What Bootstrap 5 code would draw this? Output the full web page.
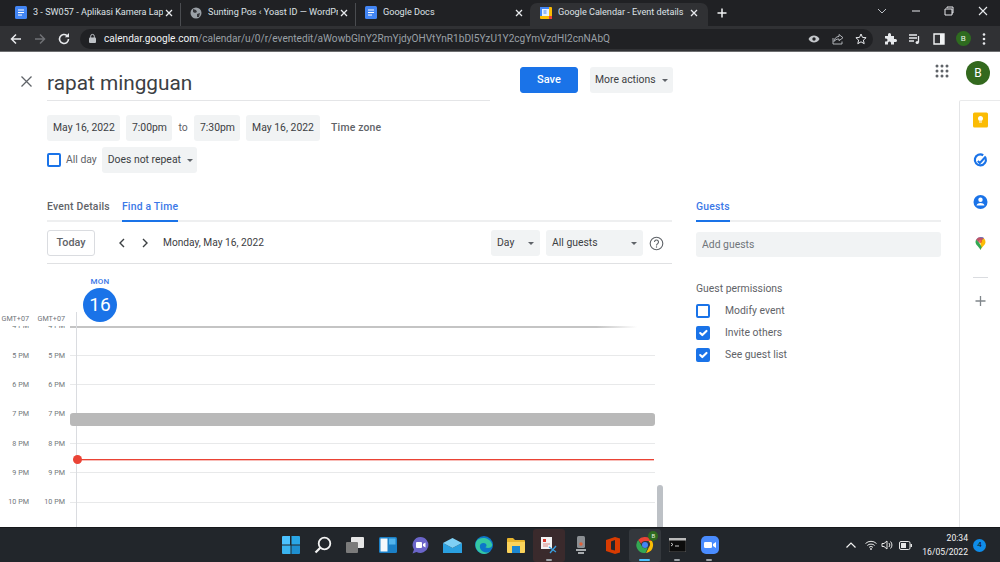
<!DOCTYPE html>
<html lang="en">

<head>
    <meta charset="UTF-8">
    <meta name="viewport" content="width=device-width, initial-scale=1">
    <title>Google Calendar - Event details</title>
    <link href="https://cdn.jsdelivr.net/npm/bootstrap@5.3.3/dist/css/bootstrap.min.css" rel="stylesheet">
    <style>
        html, body { height: 100%; overflow: hidden; }
        body { font-family: Roboto, "Liberation Sans", sans-serif; color: #3c4043; background: #fff; font-size: 10.4px; }

        /* browser chrome */
        .tab-strip { height: 26px; background: #202124; padding-left: 6px; color: #dee1e6; font-size: 9.1px; }
        .browser-tab { width: 175px; height: 23px; padding: 0 5px 4px 9px; border-right: 1px solid #4a4c50; margin-top: 3px; }
        .browser-tab.last-tab { width: 174px; border-right: 0; }
        .browser-tab.on { width: 178px; background: #303134; border: 0; border-radius: 7px 7px 0 0; padding-left: 10px; padding-right: 8px; }
        .tab-name { flex: 1; min-width: 0; white-space: nowrap; overflow: hidden; margin-left: 6px; }
        .tab-plus { margin-left: 7px; margin-top: 3px; padding-bottom: 4px; }
        .win-btns { margin-left: auto; width: 124px; padding-right: 11px; margin-top: -4px; }
        .tool-row { height: 26px; background: #303134; border-bottom: 1px solid #6d6e70; padding-left: 9px; }
        .tool-btn { width: 24px; flex: none; }
        .omni { width: 793px; height: 20px; margin-left: -1px; border-radius: 10px; background: #202124; padding: 0 0 0 8px; font-size: 10.1px; color: #9aa0a6; }
        .omni b { font-weight: 400; color: #f1f3f4; }
        .omni-url { margin-left: 3px; white-space: nowrap; }
        .omni-icons { margin-left: auto; width: 65px; flex: none; padding-right: 6px; }
        .ext-icons { width: 118px; padding: 0 5px 0 11px; flex: none; }
        .mini-avatar { width: 15px; height: 15px; border-radius: 50%; background: #2e6b1f; color: #e8f0e4; font-size: 8px; }

        /* main page */
        .page-main { height: 475px; }
        .left-area { width: 959px; }
        .side-col { width: 41px; }
        .top-row { height: 49px; }
        .close-col { width: 47px; padding-left: 20px; padding-top: 9px; }
        .event-title { width: 443px; height: 49px; padding-top: 16px; border-bottom: 1px solid #e4e5e7; font-size: 20.8px; color: #3c4043; line-height: 30px; }
        .save-btn { width: 58px; height: 26px; margin: 15px 0 0 30px; padding: 0; font-size: 11px; font-weight: 500; border-radius: 3px; background: #1a73e8; border-color: #1a73e8; }
        .grey-btn { height: 26px; padding: 0 6px; border: 0; border-radius: 3px; background: #f1f3f4; color: #3c4043; font-size: 10.4px; white-space: nowrap; }
        .grey-btn:hover { background: #f1f3f4; color: #3c4043; }
        .grey-btn.dropdown-toggle::after { color: #5f6368; margin-left: 6px; border-top-width: 3.5px; border-left-width: 3.5px; border-right-width: 3.5px; vertical-align: 1px; }
        .more-btn { width: 83px; margin: 15px 0 0 12px; padding-left: 5px; }
        .apps-btn { margin: 11px 10px 0 auto; }
        .date-row { height: 26px; margin-top: 14px; padding-left: 47px; }
        .repeat-row { height: 26px; margin-top: 6px; padding-left: 47px; }
        .date-chip { width: 73px; }
        .time-chip { width: 46px; margin-left: 6px; }
        .end-date { margin-left: 6px; width: 74px; }
        .to-word { width: 22px; text-align: center; color: #5f6368; }
        .zone-link { margin-left: 11px; color: #5f6368; font-weight: 500; font-size: 10.4px; letter-spacing: .2px; }
        .gcal-check.form-check-input { width: 14px; height: 14px; margin: 0; border: 2px solid #1a73e8; border-radius: 2px; box-shadow: none; flex: none; }
        .gcal-check.form-check-input:checked { background-color: #1a73e8; background-origin: border-box; background-size: 100%; }
        .allday-label { margin: 0 5px 0 5px; color: #5f6368; }
        .repeat-btn { width: 95px; }
        .lower-row { margin-top: 23px; padding-left: 47px; }
        .events-col { width: 625px; }
        .guests-col { width: 245px; margin-left: 24px; }
        .gcal-tabs { height: 26px; border-bottom: 2px solid #eeeff0; flex-wrap: nowrap; gap: 12px; }
        .gcal-tabs .nav-link { padding: 0; height: 26px; line-height: 21px; color: #5f6368; font-weight: 500; font-size: 10.4px; letter-spacing: .2px; }
        .gcal-tabs .nav-link.active { color: #3b78e7; border-bottom: 2px solid #1a73e8; }
        .find-bar { height: 42px; padding-top: 8px; padding-bottom: 7px; border-bottom: 1px solid #e0e1e3; }
        .today-btn { width: 48px; height: 26px; padding: 0; border: 1px solid #dadce0; border-radius: 3px; color: #5f6368; font-size: 10.8px; font-weight: 500; background: #fff; }
        .nav-arrow { margin-left: 22px; }
        .nav-arrow + .nav-arrow { margin-left: 13px; }
        .long-date { margin-left: 13px; font-size: 10.2px; }
        .day-btn { width: 49px; margin-left: auto; }
        .guest-filter { width: 97px; margin-left: 6px; }
        .help-btn { margin: 0 8px 0 6px; }

        /* calendar grid */
        .cal-wrap { position: relative; width: 672px; height: 263px; margin-left: -47px; overflow: hidden; }
        .cal-head { height: 62px; }
        .tz-label { font-size: 7.2px; color: #70757a; text-align: right; align-self: flex-end; padding-bottom: 1px; line-height: 12px; white-space: nowrap; }
        .tz-first, .hour-first { width: 29px; }
        .tz-second, .hour-second { width: 36px; }
        .hour-first, .hour-second { font-size: 7.2px; color: #70757a; text-align: right; white-space: nowrap; padding-top: 1px; }
        .head-day { margin-left: 18px; width: 34px; padding-top: 12px; position: relative; z-index: 2; }
        .head-dow { font-size: 8px; line-height: 11px; font-weight: 500; color: #3b78e7; text-align: center; letter-spacing: .3px; }
        .head-num { width: 34px; height: 34px; margin-top: 1px; border-radius: 50%; background: #1a73e8; color: #fff; font-size: 19px; }
        .hour-scroll { height: 201px; overflow: hidden; position: relative; }
        .hour-list { margin-top: -14.4px; }
        .hour-row { height: 29.3px; width: 655px; }
        .hour-line { flex: 1; margin-left: 5px; border-top: 1px solid #e8e9ea; }
        .top-shadow { position: absolute; top: 0; left: 70px; width: 585px; height: 2px; background: linear-gradient(90deg, #c4c4c4 90%, #fff 97%); }
        .day-rule { position: absolute; left: 76px; top: 48px; bottom: 0; border-left: 1px solid #dadce0; }
        .busy-block { position: absolute; left: 70px; top: 149px; width: 585px; height: 13px; border-radius: 3px; background: #b9b9b9; }
        .now-line { position: absolute; left: 77px; top: 195px; width: 577px; height: 1px; background: #ea4335; box-shadow: 0 1px 0 rgba(234, 67, 53, .35); }
        .now-dot { position: absolute; left: 72.5px; top: 191px; width: 9px; height: 9px; border-radius: 50%; background: #ea4335; }
        .scroll-thumb { position: absolute; left: 657px; top: 221px; width: 6px; height: 50px; border-radius: 3px; background: #bdc1c6; }

        /* guests */
        .guest-input.form-control { height: 25px; margin-top: 10px; padding: 0 6px; border: 0; border-radius: 3px; background: #f1f3f4; font-size: 10.4px; box-shadow: none; }
        .guest-input.form-control::placeholder { color: #70757a; }
        .perm-title { margin-top: 24px; line-height: 16px; color: #5f6368; }
        .perm-list { margin-top: 3px; }
        .perm-row { height: 22px; }
        .perm-row label { margin-left: 15px; color: #5f6368; }

        /* right side */
        .account-box { height: 48px; padding: 9px 0 0 7px; }
        .big-avatar { width: 24px; height: 24px; border-radius: 50%; background: #33691e; color: #fff; font-size: 12px; }
        .addon-panel { height: 427px; border-left: 1px solid #e4e5e7; border-top: 1px solid #e9eaeb; border-top-left-radius: 2px; padding-top: 8px; gap: 19px; }
        .addon-rule { width: 15px; border-top: 1px solid #dadce0; margin-top: 4px; }
        .addon-plus { margin-top: -7px; }

        /* taskbar */
        .task-bar { height: 35px; background: #22262b; padding-left: 275px; border-top: 1px solid #16181b; }
        .task-icon { width: 32.2px; height: 33px; flex: none; position: relative; }
        .task-icon.active-app { background: #34383d; border-radius: 3px; }
        .task-icon.snip-app { background: #3a2a2c; border-radius: 3px; }
        .run-mark { position: absolute; bottom: 1px; left: 13px; width: 6px; height: 2px; border-radius: 1px; background: #9da3a8; }
        .active-app .run-mark { background: #4cc2ff; width: 11px; left: 10px; }
        .chrome-badge { position: absolute; top: 2px; right: 3px; width: 10px; height: 10px; border-radius: 50%; background: #2e6b1f; color: #e8f0e4; font-size: 6px; }
        .tray { margin-left: auto; color: #f3f3f3; padding-right: 14px; }
        .tray-batt { margin-left: 6px; }
        .clock { font-size: 8.6px; line-height: 14px; text-align: right; margin-left: 10px; white-space: nowrap; }
        .notif { width: 13px; height: 13px; margin-left: 5px; border-radius: 50%; background: #0f8ce9; color: #111; font-size: 8px; }
    </style>
</head>

<body>

    <div class="d-flex tab-strip">
        <div class="d-flex align-items-center browser-tab">
            <svg width="12" height="13" viewBox="0 0 12 13"><rect width="12" height="13" rx="1.5" fill="#4285f4"/><path d="M3 4h6M3 6.5h6M3 9h4" stroke="#fff" stroke-width="1"/></svg>
            <span class="tab-name">3 - SW057 - Aplikasi Kamera Lap</span>
            <svg width="12" height="12" viewBox="0 0 12 12"><path d="M3 3l6 6M9 3l-6 6" stroke="#e8eaed" stroke-width="1.3"/></svg>
        </div>
        <div class="d-flex align-items-center browser-tab">
            <svg width="12" height="12" viewBox="0 0 12 12"><circle cx="6" cy="6" r="5.5" fill="#9aa0a6"/><path d="M3 2l3 1 1 2-2 1-2-1zM7 7l3-1-1 4-2 0z" fill="#35363a"/></svg>
            <span class="tab-name">Sunting Pos ‹ Yoast ID — WordPr</span>
            <svg width="12" height="12" viewBox="0 0 12 12"><path d="M3 3l6 6M9 3l-6 6" stroke="#e8eaed" stroke-width="1.3"/></svg>
        </div>
        <div class="d-flex align-items-center browser-tab last-tab">
            <svg width="12" height="13" viewBox="0 0 12 13"><rect width="12" height="13" rx="1.5" fill="#4285f4"/><path d="M3 4h6M3 6.5h6M3 9h4" stroke="#fff" stroke-width="1"/></svg>
            <span class="tab-name">Google Docs</span>
            <svg width="12" height="12" viewBox="0 0 12 12"><path d="M3 3l6 6M9 3l-6 6" stroke="#e8eaed" stroke-width="1.3"/></svg>
        </div>
        <div class="d-flex align-items-center browser-tab on">
            <svg width="12" height="12" viewBox="0 0 12 12"><rect width="12" height="12" rx="1" fill="#fbbc04"/><rect x="0" y="0" width="9" height="9" fill="#4285f4"/><rect x="2" y="2" width="7" height="7" fill="#e8f0fe"/><path d="M9 9h3v3H9z" fill="#ea4335"/><path d="M3.5 4h3M3.5 6h3" stroke="#4285f4"/></svg>
            <span class="tab-name">Google Calendar - Event details</span>
            <svg width="12" height="12" viewBox="0 0 12 12"><path d="M3 3l6 6M9 3l-6 6" stroke="#e8eaed" stroke-width="1.3"/></svg>
        </div>
        <div class="d-flex align-items-center tab-plus">
            <svg width="14" height="14" viewBox="0 0 14 14"><path d="M7 2.5v9M2.5 7h9" stroke="#f1f3f4" stroke-width="1.5"/></svg>
        </div>
        <div class="d-flex align-items-center justify-content-between win-btns">
            <svg width="12" height="12" viewBox="0 0 12 12"><path d="M2 4l4 4 4-4" stroke="#bdc1c6" fill="none"/></svg>
            <svg width="12" height="12" viewBox="0 0 12 12"><path d="M2 6h8" stroke="#e8eaed"/></svg>
            <svg width="12" height="12" viewBox="0 0 12 12"><path d="M4 3V2h6v6H9M2 4h7v6H2z" stroke="#e8eaed" fill="none"/></svg>
            <svg width="12" height="12" viewBox="0 0 12 12"><path d="M2 2l8 8M10 2l-8 8" stroke="#e8eaed" stroke-width="1.1"/></svg>
        </div>
    </div>

    <div class="d-flex align-items-center tool-row">
        <span class="tool-btn"><svg width="14" height="14" viewBox="0 0 14 14"><path d="M12 7H2.5M7 2.5L2.5 7 7 11.5" stroke="#e8eaed" stroke-width="1.5" fill="none"/></svg></span>
        <span class="tool-btn"><svg width="14" height="14" viewBox="0 0 14 14"><path d="M2 7h9.5M7 2.5L11.5 7 7 11.5" stroke="#6f7175" stroke-width="1.5" fill="none"/></svg></span>
        <span class="tool-btn"><svg width="14" height="14" viewBox="0 0 14 14"><path d="M11.5 7A4.5 4.5 0 1 1 10 3.6" stroke="#e8eaed" stroke-width="1.6" fill="none"/><path d="M12 1v4.2H7.8z" fill="#e8eaed"/></svg></span>
        <div class="d-flex align-items-center omni">
            <svg width="9" height="11" viewBox="0 0 9 11" class="me-1"><rect x="1" y="4.5" width="7" height="5.5" rx="1" fill="#bdc1c6"/><path d="M2.7 5V3.2a1.8 1.8 0 0 1 3.6 0V5" stroke="#bdc1c6" fill="none"/></svg>
            <span class="omni-url"><b>calendar.google.com</b>/calendar/u/0/r/eventedit/aWowbGlnY2RmYjdyOHVtYnR1bDI5YzU1Y2cgYmVzdHI2cnNAbQ</span>
            <div class="d-flex align-items-center justify-content-between omni-icons">
                <svg width="12" height="12" viewBox="0 0 12 12"><path d="M.5 6C2 3.3 4 2.5 6 2.5S10 3.3 11.5 6C10 8.7 8 9.5 6 9.5S2 8.7.5 6z" fill="#c4c7cb"/><circle cx="6" cy="6" r="1.7" fill="#202124"/></svg>
                <svg width="12" height="12" viewBox="0 0 12 12"><path d="M7 1.5l4 3.2-4 3V6C4.5 6 3 7 2 8.5 2.3 5.5 4 3.7 7 3.4zM1 5v6h9V8.5" stroke="#bdc1c6" fill="none" stroke-width=".9"/></svg>
                <svg width="12" height="12" viewBox="0 0 12 12"><path d="M6 1l1.500 3.400 3.600.3-2.700 2.400.8 3.600L6 8.800l-3.200 1.900.8-3.600L.9 4.700l3.600-.3z" stroke="#e8eaed" fill="none"/></svg>
            </div>
        </div>
        <div class="d-flex align-items-center justify-content-between ext-icons">
            <svg width="13" height="13" viewBox="0 0 13 13"><path d="M1 4h3V2.500a1.500 1.500 0 0 1 3 0V4h3v3h1.500a1.500 1.500 0 0 1 0 3H10v2.500H7V11a1.500 1.500 0 0 0-3 0v1.500H1V9.500h1a1.500 1.500 0 0 0 0-3H1z" fill="#e8eaed"/></svg>
            <svg width="13" height="12" viewBox="0 0 13 12"><path d="M1 2h8M1 5h8M1 8h5" stroke="#e8eaed" stroke-width="1.3"/><path d="M10.500 3v6.500" stroke="#e8eaed" stroke-width="1.3"/><circle cx="9.200" cy="9.500" r="1.600" fill="#e8eaed"/></svg>
            <svg width="12" height="12" viewBox="0 0 12 12"><path d="M1 1h10v10H1z" stroke="#f1f3f4" stroke-width="1.4" fill="none"/><path d="M7 1h4v10H7z" fill="#f1f3f4"/></svg>
            <span class="d-flex align-items-center justify-content-center mini-avatar">B</span>
            <svg width="4" height="14" viewBox="0 0 4 14"><circle cx="2" cy="2.500" r="1.300" fill="#e8eaed"/><circle cx="2" cy="7" r="1.300" fill="#e8eaed"/><circle cx="2" cy="11.500" r="1.300" fill="#e8eaed"/></svg>
        </div>
    </div>

    <div class="d-flex page-main">
        <div class="left-area">
            <div class="d-flex top-row">
                <div class="d-flex align-items-center close-col">
                    <svg width="13" height="13" viewBox="0 0 13 13"><path d="M1.500 1.500l10 10M11.500 1.500l-10 10" stroke="#5f6368" stroke-width="1.3"/></svg>
                </div>
                <div class="event-title">rapat mingguan</div>
                <button type="button" class="btn btn-primary save-btn">Save</button>
                <button type="button" class="btn grey-btn dropdown-toggle more-btn">More actions</button>
                <div class="apps-btn">
                    <svg width="14" height="14" viewBox="0 0 14 14" fill="#5f6368"><circle cx="2" cy="2" r="1.500"/><circle cx="7" cy="2" r="1.500"/><circle cx="12" cy="2" r="1.500"/><circle cx="2" cy="7" r="1.500"/><circle cx="7" cy="7" r="1.500"/><circle cx="12" cy="7" r="1.500"/><circle cx="2" cy="12" r="1.500"/><circle cx="7" cy="12" r="1.500"/><circle cx="12" cy="12" r="1.500"/></svg>
                </div>
            </div>

            <div class="d-flex align-items-center date-row">
                <button type="button" class="btn grey-btn date-chip">May 16, 2022</button>
                <button type="button" class="btn grey-btn time-chip">7:00pm</button>
                <span class="to-word">to</span>
                <button type="button" class="btn grey-btn time-chip ms-0">7:30pm</button>
                <button type="button" class="btn grey-btn end-date">May 16, 2022</button>
                <span class="zone-link">Time zone</span>
            </div>

            <div class="d-flex align-items-center repeat-row">
                <input class="form-check-input gcal-check" type="checkbox" id="allDay">
                <label class="allday-label" for="allDay">All day</label>
                <button type="button" class="btn grey-btn dropdown-toggle repeat-btn">Does not repeat</button>
            </div>

            <div class="d-flex lower-row">
                <div class="events-col">
                    <ul class="nav gcal-tabs">
                        <li class="nav-item"><a class="nav-link" href="#">Event Details</a></li>
                        <li class="nav-item"><a class="nav-link active" href="#">Find a Time</a></li>
                    </ul>

                    <div class="d-flex align-items-center find-bar">
                        <button type="button" class="btn today-btn">Today</button>
                        <svg class="nav-arrow" width="10" height="12" viewBox="0 0 10 12"><path d="M7 2L3 6l4 4" stroke="#3c4043" stroke-width="1.4" fill="none"/></svg>
                        <svg class="nav-arrow" width="10" height="12" viewBox="0 0 10 12"><path d="M3 2l4 4-4 4" stroke="#3c4043" stroke-width="1.4" fill="none"/></svg>
                        <span class="long-date">Monday, May 16, 2022</span>
                        <button type="button" class="btn grey-btn dropdown-toggle d-flex align-items-center justify-content-between day-btn">Day</button>
                        <button type="button" class="btn grey-btn dropdown-toggle d-flex align-items-center justify-content-between guest-filter">All guests</button>
                        <svg class="help-btn" width="15" height="15" viewBox="0 0 15 15"><circle cx="7.5" cy="7.5" r="6.3" stroke="#5f6368" stroke-width="1.1" fill="none"/><path d="M5.5 6a2 2 0 1 1 3.2 1.6c-.8.6-1.2 1-1.2 1.9" stroke="#5f6368" stroke-width="1.1" fill="none"/><circle cx="7.5" cy="11" r=".7" fill="#5f6368"/></svg>
                    </div>

                    <div class="cal-wrap">
                        <div class="d-flex cal-head">
                            <div class="tz-label tz-first">GMT+07</div>
                            <div class="tz-label tz-second">GMT+07</div>
                            <div class="head-day">
                                <div class="head-dow">MON</div>
                                <div class="d-flex align-items-center justify-content-center head-num">16</div>
                            </div>
                        </div>
                        <div class="hour-scroll">
                            <div class="hour-list" id="hourList"></div>
                            <div class="top-shadow"></div>
                        </div>
                        <div class="day-rule"></div>
                        <div class="busy-block"></div>
                        <div class="now-line"></div>
                        <div class="now-dot"></div>
                        <div class="scroll-thumb"></div>
                    </div>
                </div>

                <div class="guests-col">
                    <ul class="nav gcal-tabs">
                        <li class="nav-item"><a class="nav-link active" href="#">Guests</a></li>
                    </ul>
                    <input type="text" class="form-control guest-input" placeholder="Add guests">
                    <div class="perm-title">Guest permissions</div>
                    <div class="perm-list">
                        <div class="d-flex align-items-center perm-row">
                            <input class="form-check-input gcal-check" type="checkbox" id="permModify">
                            <label for="permModify">Modify event</label>
                        </div>
                        <div class="d-flex align-items-center perm-row">
                            <input class="form-check-input gcal-check" type="checkbox" id="permInvite" checked>
                            <label for="permInvite">Invite others</label>
                        </div>
                        <div class="d-flex align-items-center perm-row">
                            <input class="form-check-input gcal-check" type="checkbox" id="permSee" checked>
                            <label for="permSee">See guest list</label>
                        </div>
                    </div>
                </div>
            </div>
        </div>

        <div class="side-col">
            <div class="account-box">
                <div class="d-flex align-items-center justify-content-center big-avatar">B</div>
            </div>
            <div class="d-flex flex-column align-items-center addon-panel">
                <svg width="15" height="22" viewBox="0 0 15 22"><rect y="3.5" width="15" height="15" rx="1.5" fill="#fbbc04"/><path d="M5 9.5a2.5 2.5 0 1 1 5 0c0 1-.6 1.6-1 2.2H6c-.4-.6-1-1.200-1-2.200z" fill="#fff"/><path d="M6 13h3" stroke="#fff"/></svg>
                <svg width="15" height="22" viewBox="0 0 15 22"><path d="M12.5 8a5.5 5.5 0 1 1-2.3-2.8" stroke="#1a73e8" stroke-width="2.2" fill="none"/><path d="M4.8 11l2 2 6-6.5" stroke="#1a73e8" stroke-width="2" fill="none"/></svg>
                <svg width="15" height="22" viewBox="0 0 15 22"><circle cx="7.5" cy="11" r="7" fill="#1a73e8"/><circle cx="7.5" cy="8.8" r="2.2" fill="#fff"/><path d="M3.5 14.5c.6-1.8 2.2-2.5 4-2.5s3.4.7 4 2.5z" fill="#fff"/></svg>
                <svg width="11" height="22" viewBox="0 0 11 22"><path d="M5.5 5A5 5 0 0 1 10.5 10c0 3-3.5 4.5-5 8z" fill="#fbbc04"/><path d="M5.5 5A5 5 0 0 0 1.2 7.5L4 10.5a1.8 1.8 0 0 1 2.8-2.2L9 5.9A5 5 0 0 0 5.5 5z" fill="#4285f4"/><path d="M1.2 7.5A5 5 0 0 0 .5 10c0 3 3.5 4.5 5 8l1.2-3L4 10.500z" fill="#34a853"/><path d="M9 5.900L6.800 8.300a1.800 1.800 0 0 1-2.500 2.400L1.200 7.500A5 5 0 0 1 4 5.200z" fill="#ea4335" opacity=".75"/></svg>
                <div class="addon-rule"></div>
                <svg class="addon-plus" width="11" height="22" viewBox="0 0 11 22"><path d="M5.5 6v10M.5 11h10" stroke="#80868b" stroke-width="1.3"/></svg>
            </div>
        </div>
    </div>

    <div class="d-flex align-items-center task-bar">
        <div class="d-flex align-items-center justify-content-center task-icon">
            <svg width="18" height="18" viewBox="0 0 18 18"><path d="M0 1a1 1 0 0 1 1-1h7v8.500H0z" fill="#4cc2ff"/><path d="M9.500 0H17a1 1 0 0 1 1 1v7.500H9.500z" fill="#2aa6e6"/><path d="M0 9.500h8.500V18H1a1 1 0 0 1-1-1z" fill="#3ab4f0"/><path d="M9.500 9.500H18V17a1 1 0 0 1-1 1H9.500z" fill="#1e8fd0"/></svg>
        </div>
        <div class="d-flex align-items-center justify-content-center task-icon">
            <svg width="18" height="18" viewBox="0 0 18 18"><circle cx="10.5" cy="7.5" r="5.8" stroke="#f3f3f3" stroke-width="1.8" fill="none"/><path d="M6.300 11.800L1.500 16.500" stroke="#f3f3f3" stroke-width="2.2"/></svg>
        </div>
        <div class="d-flex align-items-center justify-content-center task-icon">
            <svg width="18" height="16" viewBox="0 0 18 16"><rect x="5" y="0" width="13" height="11" rx="1" fill="#e6e6e6"/><rect x="0" y="5" width="12" height="11" rx="1" fill="#7b7b7b"/></svg>
        </div>
        <div class="d-flex align-items-center justify-content-center task-icon">
            <svg width="18" height="16" viewBox="0 0 18 16"><rect width="18" height="16" rx="1.5" fill="#1b80c7"/><rect x="1.5" y="1.5" width="7" height="13" fill="#f4f8fb"/><rect x="10" y="1.5" width="6.5" height="6" fill="#53b5ee"/></svg>
        </div>
        <div class="d-flex align-items-center justify-content-center task-icon">
            <svg width="18" height="18" viewBox="0 0 18 18"><path d="M9.500 1a8 8 0 1 1-4 15l-4 1.500L3 13.500A8 8 0 0 1 9.500 1z" fill="#6b65c9"/><rect x="5" y="6" width="6" height="6" rx="1" fill="#fff"/><path d="M12 8l2.500-1.500v5L12 10z" fill="#fff"/></svg>
        </div>
        <div class="d-flex align-items-center justify-content-center task-icon">
            <svg width="19" height="15" viewBox="0 0 19 15"><path d="M0 5l9.500 5L19 5v10H0z" fill="#2aa0e0"/><path d="M0 5l9.500-5L19 5l-9.500 5z" fill="#7fd0f5"/></svg>
        </div>
        <div class="d-flex align-items-center justify-content-center task-icon">
            <svg width="18" height="18" viewBox="0 0 18 18"><circle cx="9" cy="9" r="9" fill="#0c76c9"/><path d="M1 6c2-5 13-6 16 2 .7 2-1 4-4 4-2.500 0-2.500-1-2.500-1 2-1 1-4-2-4C5 7 4 10 5.500 13c1.500 3 6 4.500 9.500 2.500-3 3.500-9 3.300-12-.5C.5 12.500 0 9 1 6z" fill="#35c7a2"/></svg>
        </div>
        <div class="d-flex align-items-center justify-content-center task-icon">
            <svg width="18" height="15" viewBox="0 0 18 15"><path d="M0 1a1 1 0 0 1 1-1h5l2 2h9a1 1 0 0 1 1 1v3H0z" fill="#e8b52e"/><path d="M0 4h18v10a1 1 0 0 1-1 1H1a1 1 0 0 1-1-1z" fill="#fbd35a"/><rect x="5" y="8" width="8" height="7" fill="#1c87d0"/></svg>
        </div>
        <div class="d-flex align-items-center justify-content-center task-icon snip-app">
            <svg width="18" height="18" viewBox="0 0 18 18"><rect x="1" y="1" width="11" height="12" fill="#f2f2f2"/><rect x="3" y="3" width="3" height="3" fill="#d9382b"/><path d="M3 8h7M3 10h5" stroke="#d98c86"/><path d="M9 11l7 5M16 10l-6 7" stroke="#3aa0e0" stroke-width="1.3"/></svg>
            <span class="run-mark"></span>
        </div>
        <div class="d-flex align-items-center justify-content-center task-icon">
            <svg width="10" height="18" viewBox="0 0 10 18"><rect x="1" y="0" width="8" height="12" rx="1.5" fill="#8b8f93"/><circle cx="5" cy="8" r="1.7" fill="#e0613a"/><path d="M0 13h10v2H0zM2 16h6v2H2z" fill="#a7abae"/></svg>
        </div>
        <div class="d-flex align-items-center justify-content-center task-icon">
            <svg width="14" height="17" viewBox="0 0 14 17"><path d="M0 3l9-3 5 1.500v14L9 17 0 14z" fill="#d83b01"/><path d="M5 4.500l4-1.500v10.500l-4-1z" fill="#22262b"/></svg>
        </div>
        <div class="d-flex align-items-center justify-content-center task-icon active-app">
            <svg width="18" height="18" viewBox="0 0 18 18"><path d="M9 1a8 8 0 0 1 7 4H9a4 4 0 0 0-3.800 2.800L2.200 4A8 8 0 0 1 9 1z" fill="#ea4335"/><path d="M16 5a8 8 0 0 1-6 12l3-6a4 4 0 0 0-.6-6z" fill="#fbbc04"/><path d="M2.200 4l3.500 6a4 4 0 0 0 6 1.500L9.500 17A8 8 0 0 1 2.200 4z" fill="#34a853"/><circle cx="9" cy="9" r="3" fill="#4285f4"/></svg>
            <span class="d-flex align-items-center justify-content-center chrome-badge">B</span>
            <span class="run-mark"></span>
        </div>
        <div class="d-flex align-items-center justify-content-center task-icon">
            <svg width="17" height="14" viewBox="0 0 17 14"><rect width="17" height="14" fill="#0c0c0c" stroke="#8a8a8a" stroke-width=".6"/><rect width="17" height="2.500" fill="#bbb"/><path d="M2 5l2 1.500L2 8M6 8h4" stroke="#ddd" stroke-width=".9" fill="none"/></svg>
            <span class="run-mark"></span>
        </div>
        <div class="d-flex align-items-center justify-content-center task-icon">
            <svg width="18" height="18" viewBox="0 0 18 18"><rect width="18" height="18" rx="5" fill="#4a8cff"/><rect x="3" y="6" width="8" height="6" rx="1.300" fill="#fff"/><path d="M12 8l3-2v6l-3-2z" fill="#fff"/></svg>
            <span class="run-mark"></span>
        </div>

        <div class="d-flex align-items-center tray">
            <svg width="12" height="8" viewBox="0 0 12 8" class="me-1"><path d="M1.500 6.500L6 2l4.500 4.500" stroke="#f3f3f3" stroke-width="1.2" fill="none"/></svg>
            <svg width="12" height="10" viewBox="0 0 12 10" class="ms-1"><path d="M.5 3.500a8 8 0 0 1 11 0M2.300 5.500a5.500 5.500 0 0 1 7.400 0M4 7.300a3 3 0 0 1 4 0" stroke="#e6e6e6" fill="none"/><circle cx="6" cy="9" r=".9" fill="#e6e6e6"/></svg>
            <svg width="12" height="12" viewBox="0 0 12 12" class="ms-1"><path d="M1 4.500h2L6 2v8L3 7.500H1z" stroke="#e6e6e6" fill="none"/><path d="M8 4a3 3 0 0 1 0 4M9.500 2.500a5 5 0 0 1 0 7" stroke="#e6e6e6" fill="none"/></svg>
            <svg width="13" height="9" viewBox="0 0 13 9" class="tray-batt"><rect x=".5" y=".5" width="10.5" height="8" rx="1.5" stroke="#e6e6e6" fill="none"/><rect x="2" y="2" width="5" height="5" fill="#e6e6e6"/><rect x="11.5" y="3" width="1.5" height="3" fill="#e6e6e6"/></svg>
            <div class="clock">
                <div>20:34</div>
                <div>16/05/2022</div>
            </div>
            <span class="d-flex align-items-center justify-content-center notif">4</span>
        </div>
    </div>

    <script>
        // hour rows of the grid, 4 PM is cut off under the header
        const hours = ['4 PM', '5 PM', '6 PM', '7 PM', '8 PM', '9 PM', '10 PM'];
        const list = document.getElementById('hourList');
        hours.forEach(h => {
            const row = document.createElement('div');
            row.className = 'd-flex align-items-center hour-row';
            row.innerHTML = '<span class="hour-first">' + h + '</span>' +
                '<span class="hour-second">' + h + '</span>' +
                '<span class="hour-line"></span>';
            list.appendChild(row);
        });
    </script>
    <script src="https://cdn.jsdelivr.net/npm/bootstrap@5.3.3/dist/js/bootstrap.bundle.min.js"></script>

</body>

</html>
